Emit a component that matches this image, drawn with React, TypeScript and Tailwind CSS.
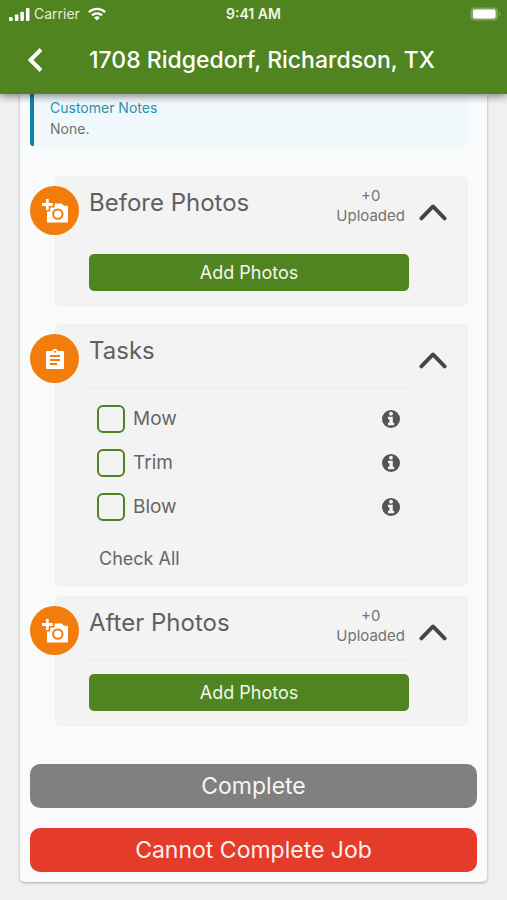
import { useState } from "react";
import type { ReactNode } from "react";

const StatusBar = () => {
  return (
    <div className="grid grid-cols-3 items-center h-7 px-1.5 text-sm">
      <div className="flex items-center gap-1 pl-0.5 text-[#e4eedb]">
        <svg className="w-[22px] h-3.5" viewBox="0 0 22 14" fill="#fff">
          <rect x="1" y="10" width="3.6" height="4" rx="1" />
          <rect x="6.8" y="7.6" width="3.6" height="6.4" rx="1" />
          <rect x="12.3" y="4.8" width="3.6" height="9.2" rx="1" />
          <rect x="17.9" y="1" width="3.6" height="13" rx="1" />
        </svg>
        <span>Carrier</span>
        <svg className="w-[18px] h-3.5 ml-1" viewBox="0 0 18 14" fill="none" stroke="#fff">
          <path d="M0.9 5.2a11.6 11.6 0 0 1 16.2 0" strokeWidth="2.4" />
          <path d="M4 8.4a7.2 7.2 0 0 1 10 0" strokeWidth="2.3" />
          <path d="M9 13.6 6.1 10.7a4.2 4.2 0 0 1 5.8 0z" fill="#fff" stroke="none" />
        </svg>
      </div>
      <div className="text-center font-semibold text-[#f0f6ea]">9:41 AM</div>
      <svg className="w-[31px] h-3.5 justify-self-end" viewBox="0 0 31 14">
        <rect x="0.5" y="0.5" width="27.5" height="13" rx="4" fill="#7da55c" />
        <rect x="3" y="2.5" width="22.5" height="9" rx="1.8" fill="#fff" />
        <path d="M29 5v4c1-.4 1.6-1.1 1.6-2S30 5.4 29 5z" fill="#7da55c" />
      </svg>
    </div>
  );
};

const Header = () => {
  return (
    <header className="relative z-10 bg-[#4f8420] text-white shadow-[0_2px_8px_rgba(0,0,0,0.5)]">
      <StatusBar />
      <div className="flex items-center h-[66px] pb-0.5 pl-[26px]">
        <button type="button" aria-label="Back" className="cursor-pointer">
          <svg
            className="w-[18px] h-6"
            viewBox="0 0 18 24"
            fill="none"
            stroke="currentColor"
            strokeWidth="4"
          >
            <path d="M15 1.5 4.5 12 15 22.5" />
          </svg>
        </button>
        <h1 className="ml-[45px] text-[23px] font-medium whitespace-nowrap">
          1708 Ridgedorf, Richardson, TX
        </h1>
      </div>
    </header>
  );
};

const AddPhotoIcon = () => {
  return (
    <svg className="w-[26px] h-6" viewBox="0 0 26 24" fill="currentColor">
      <path d="M3.9 0h2.8v4.1h4.1v2.8H6.7V11H3.9V6.9H0V4.1h3.9z" />
      <path
        fillRule="evenodd"
        d="M12.6 4.6h7.2l2 2.2h3A1.2 1.2 0 0 1 26 8v14.4a1.2 1.2 0 0 1-1.2 1.2H6.2A1.2 1.2 0 0 1 5 22.4v-9.9h3.2V8.4h4.4zM15.8 9.4a5.7 5.7 0 1 0 0 11.4 5.7 5.7 0 0 0 0-11.4z"
      />
      <circle cx="15.8" cy="15.1" r="3.7" />
    </svg>
  );
};

const ClipboardIcon = () => {
  return (
    <svg className="w-[18px] h-5" viewBox="0 0 18 20" fill="currentColor">
      <path
        fillRule="evenodd"
        d="M1.3 2h4.9a2.9 2.9 0 0 1 5.6 0h4.9A1.3 1.3 0 0 1 18 3.3v15.4a1.3 1.3 0 0 1-1.3 1.3H1.3A1.3 1.3 0 0 1 0 18.7V3.3A1.3 1.3 0 0 1 1.3 2zM9 1.8a1 1 0 1 0 0 2 1 1 0 0 0 0-2zM4 6v2h10V6zM4 10v2h10v-2zM4 14v2h7v-2z"
      />
    </svg>
  );
};

const InfoIcon = () => {
  return (
    <svg className="size-[18px]" viewBox="0 0 18 18">
      <circle cx="9" cy="9" r="9" fill="#555" />
      <circle cx="9" cy="3.7" r="1.9" fill="#f3f3f3" />
      <path d="M6 6.7h4.8v6h1.4v2.5H5.9v-2.5h1.5V9.2H6z" fill="#f3f3f3" />
    </svg>
  );
};

type SectionProps = {
  title: string;
  icon: ReactNode;
  uploaded?: number;
  children: ReactNode;
};

const Section = ({ title, icon, uploaded, children }: SectionProps) => {
  const [open, setOpen] = useState(true);

  return (
    <section className="flex items-start ml-[25px] mr-[9px] rounded-md border border-[#eeeff0] bg-[#f3f3f3]">
      <div className="flex items-center justify-center shrink-0 size-[49px] mt-[9px] -ml-[26px] rounded-full bg-[#f27d0c] text-white">
        {icon}
      </div>
      <div className="flex-1 ml-2.5">
        <div className="flex justify-between h-16 pt-[9px] border-b-2 border-[#efefef]">
          <h2 className="text-2xl leading-[34px] text-[#606060] whitespace-nowrap">
            {title}
          </h2>
          {uploaded !== undefined && (
            <p className="mr-1 text-center text-[15px] leading-5 text-[#737373]">
              +{uploaded}
              <br />
              Uploaded
            </p>
          )}
        </div>
        {open && children}
      </div>
      <button
        type="button"
        aria-label={`Toggle ${title}`}
        aria-expanded={open}
        onClick={() => setOpen(!open)}
        className="flex justify-center w-12 mt-[26px] mr-2.5 cursor-pointer"
      >
        <svg
          className="w-7 h-[18px]"
          viewBox="0 0 28 18"
          fill="none"
          stroke="#444"
          strokeWidth="3.8"
          strokeLinecap="round"
          strokeLinejoin="round"
        >
          <path d="M2.4 15.4 14 3.4l11.6 12" />
        </svg>
      </button>
    </section>
  );
};

const AddPhotos = () => {
  return (
    <button
      type="button"
      className="w-full h-[37px] mt-[13px] mb-3.5 rounded-[5px] bg-[#4f8420] text-lg text-[#f4f8f0] cursor-pointer"
    >
      Add Photos
    </button>
  );
};

const tasks = ["Mow", "Trim", "Blow"];

const TaskList = () => {
  const [checked, setChecked] = useState<string[]>([]);

  const toggle = (task: string) => {
    setChecked(
      checked.includes(task)
        ? checked.filter((t) => t !== task)
        : [...checked, task]
    );
  };

  return (
    <div className="pt-2 pb-2.5 pl-2 text-[#666]">
      <ul>
        {tasks.map((task) => (
          <li key={task} className="flex items-center justify-between h-11 pr-[9px]">
            <label className="flex items-center gap-2 text-[19px] cursor-pointer">
              <input
                type="checkbox"
                checked={checked.includes(task)}
                onChange={() => toggle(task)}
                className="appearance-none size-7 rounded-md border-2 border-[#4f8420] checked:bg-[#4f8420]"
              />
              {task}
            </label>
            <button type="button" aria-label={`${task} info`} className="cursor-pointer">
              <InfoIcon />
            </button>
          </li>
        ))}
      </ul>
      <button
        type="button"
        onClick={() => setChecked(tasks)}
        className="block h-8 mt-3.5 ml-0.5 text-lg cursor-pointer"
      >
        Check All
      </button>
    </div>
  );
};

const App = () => {
  return (
    <div className="min-h-screen bg-[#f0f0f0] font-[Inter,Roboto,sans-serif]">
      <Header />
      <main className="mx-5 px-2.5 pb-2.5 rounded-b-[5px] bg-[#f9fafc] shadow-[0_1px_3px_rgba(0,0,0,0.3)]">
        <div className="mr-2.5 h-[52px] pl-4 pt-[3px] rounded-bl-[3px] border-l-4 border-[#0d85a8] bg-[#f0f8fb] text-sm leading-[21px]">
          <h3 className="text-[#2b91b0]">Customer Notes</h3>
          <p className="text-[#707070]">None.</p>
        </div>
        <div className="mt-[30px]">
          <Section title="Before Photos" icon={<AddPhotoIcon />} uploaded={0}>
            <AddPhotos />
          </Section>
        </div>
        <div className="mt-[18px]">
          <Section title="Tasks" icon={<ClipboardIcon />}>
            <TaskList />
          </Section>
        </div>
        <div className="mt-2.5">
          <Section title="After Photos" icon={<AddPhotoIcon />} uploaded={0}>
            <AddPhotos />
          </Section>
        </div>
        <div className="flex flex-col gap-5 mt-[38px]">
          <button
            type="button"
            className="h-11 rounded-[10px] bg-[#808080] text-[23px] text-[#f5f5f5] cursor-pointer"
          >
            Complete
          </button>
          <button
            type="button"
            className="h-11 rounded-[10px] bg-[#e53b2a] text-[23px] text-[#fdf0ee] cursor-pointer"
          >
            Cannot Complete Job
          </button>
        </div>
      </main>
    </div>
  );
};

export default App;
